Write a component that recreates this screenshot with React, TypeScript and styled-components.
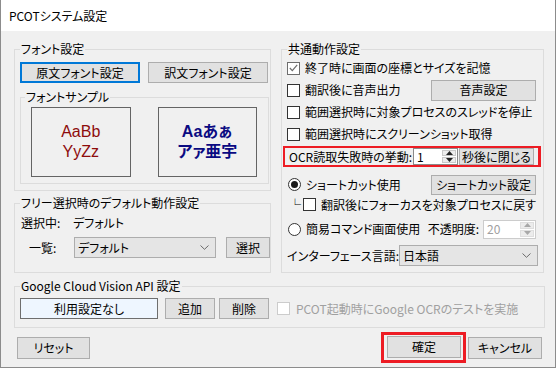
import React from "react";
import styled, { createGlobalStyle } from "styled-components";

const GlobalStyle = createGlobalStyle`
  html, body { margin: 0; padding: 0; background: #ffffff; }
  body {
    font-family: "Noto Sans CJK JP", "Noto Sans", sans-serif;
    font-size: 12px;
    color: #000;
    font-feature-settings: "palt";
  }
  * { box-sizing: border-box; }
`;

const Window = styled.div`
  width: 556px;
  height: 368px;
  border: 1px solid #8c8c8c;
  border-top: none;
  background: #f0f0f0;
  display: flex;
  flex-direction: column;
`;

const TitleBar = styled.div`
  height: 31px;
  flex: none;
  background: #ffffff;
  padding-left: 8px;
  display: flex;
  align-items: center;
  font-size: 12px;
  line-height: 16px;
`;

const Body = styled.div`
  flex: 1;
  padding: 10px 10px 0 13px;
  display: flex;
  flex-direction: column;
`;

const Columns = styled.div`
  display: flex;
  gap: 10px;
`;

const Column = styled.div<{ $w: number }>`
  width: ${(p) => p.$w}px;
  flex: none;
  display: flex;
  flex-direction: column;
`;

const Group = styled.fieldset<{ $pad: string; $mt?: number }>`
  margin: ${(p) => p.$mt ?? 0}px 0 0 0;
  min-width: 0;
  border: 1px solid #dcdcdc;
  padding: ${(p) => p.$pad};
  display: flex;
  flex-direction: column;
`;

const Legend = styled.legend<{ $inset?: number }>`
  padding: 0 1px;
  margin-left: ${(p) => p.$inset ?? 0}px;
  line-height: 16px;
  height: 16px;
  font-size: 12px;
`;

const Btn = styled.button<{ $w: number; $h?: number; $focus?: boolean }>`
  width: ${(p) => p.$w}px;
  height: ${(p) => p.$h ?? 21}px;
  flex: none;
  margin: 0;
  padding: 0;
  background: #e1e1e1;
  border: ${(p) => (p.$focus ? "2px solid #0078d7" : "1px solid #adadad")};
  font: inherit;
  font-size: 12px;
  color: #000;
  line-height: 16px;
  display: flex;
  align-items: center;
  justify-content: center;
  font-feature-settings: "palt";
`;

const ButtonRow = styled.div<{ $gap: number }>`
  display: flex;
  gap: ${(p) => p.$gap}px;
`;

const SampleRow = styled.div`
  display: flex;
  gap: 27px;
`;

const SampleBox = styled.div<{ $tone: "red" | "blue" }>`
  width: 100px;
  height: 70px;
  border: 1px solid #646464;
  display: flex;
  flex-direction: column;
  align-items: center;
  justify-content: center;
  font-family: "Liberation Sans", "Noto Sans CJK JP", sans-serif;
  font-size: 16px;
  line-height: 20px;
  color: ${(p) => (p.$tone === "red" ? "#8e0c0c" : "#0a0a82")};
  font-weight: ${(p) => (p.$tone === "red" ? 400 : 700)};
`;

const SampleLine = styled.span`
  display: block;
  height: 20px;
  line-height: 20px;
`;

const Row = styled.div<{ $h: number; $mt?: number; $pl?: number; $gap?: number }>`
  height: ${(p) => p.$h}px;
  margin-top: ${(p) => p.$mt ?? 0}px;
  padding-left: ${(p) => p.$pl ?? 0}px;
  display: flex;
  align-items: center;
  gap: ${(p) => p.$gap ?? 0}px;
  line-height: 16px;
  white-space: nowrap;
`;

const Label = styled.span<{ $w?: number; $pl?: number; $color?: string }>`
  ${(p) => (p.$w ? `width: ${p.$w}px; flex: none;` : "")}
  padding-left: ${(p) => p.$pl ?? 0}px;
  color: ${(p) => p.$color ?? "#000"};
  line-height: 16px;
`;

const RightRow = styled.div<{ $h: number; $mt?: number }>`
  height: ${(p) => p.$h}px;
  margin-top: ${(p) => p.$mt ?? 0}px;
  padding: 0 5px 0 4px;
  display: flex;
  align-items: center;
  line-height: 16px;
  white-space: nowrap;
`;

const Push = styled.div`
  margin-left: auto;
`;

const CheckBoxBox = styled.span<{ $tone?: "normal" | "soft" | "disabled" }>`
  width: 13px;
  height: 13px;
  flex: none;
  border: 1px solid
    ${(p) => (p.$tone === "soft" ? "#6d6d6d" : p.$tone === "disabled" ? "#cccccc" : "#333333")};
  background: #ffffff;
  display: inline-flex;
  align-items: center;
  justify-content: center;
  margin-right: ${(p) => (p.$tone === "disabled" ? 6 : 5)}px;
`;

const RadioCircle = styled.span`
  width: 13px;
  height: 13px;
  flex: none;
  border-radius: 50%;
  border: 1px solid #333333;
  background: #ffffff;
  display: inline-flex;
  align-items: center;
  justify-content: center;
  margin-left: 1px;
  margin-right: 5px;
`;

const RadioDot = styled.span`
  width: 7px;
  height: 7px;
  border-radius: 50%;
  background: #1a1a1a;
`;

const Corner = styled.span`
  width: 12px;
  flex: none;
  margin-left: 2px;
  margin-right: 2px;
  color: #000;
  font-size: 12px;
  line-height: 12px;
`;

const RedFrame = styled.div`
  height: 21px;
  margin-top: 1px;
  border: 2px solid #ed1c24;
  border-right-width: 3px;
  display: flex;
  align-items: stretch;
  padding-left: 4px;
  white-space: nowrap;
`;

const RedLabel = styled.span`
  width: 124px;
  flex: none;
  display: flex;
  align-items: center;
  line-height: 16px;
`;

const SpinWrap = styled.div<{ $w: number; $h: number; $disabled?: boolean }>`
  width: ${(p) => p.$w}px;
  height: ${(p) => p.$h}px;
  flex: none;
  display: flex;
  background: #ffffff;
  border: 1px solid ${(p) => (p.$disabled ? "#cccccc" : "#8a8a8a")};
  color: ${(p) => (p.$disabled ? "#a0a0a0" : "#000")};
`;

const SpinValue = styled.span`
  flex: 1;
  padding-left: 3px;
  display: flex;
  align-items: center;
  line-height: 14px;
`;

const SpinArrows = styled.div`
  width: 15px;
  flex: none;
  display: flex;
  flex-direction: column;
  gap: 1px;
  padding: 1px 1px 1px 0;
`;

const SpinArrow = styled.span<{ $disabled?: boolean }>`
  flex: 1;
  display: flex;
  align-items: center;
  justify-content: center;
  background: #ececec;
  border: 1px solid ${(p) => (p.$disabled ? "#dedede" : "#c8c8c8")};
`;

const SelectBox = styled.div<{ $w: number }>`
  width: ${(p) => p.$w}px;
  height: 21px;
  flex: none;
  border: 1px solid #adadad;
  background: #e5e5e5;
  display: flex;
  align-items: center;
  justify-content: space-between;
  padding: 0 6px 0 3px;
  line-height: 16px;
`;

const ApiBox = styled.div`
  width: 138px;
  height: 21px;
  flex: none;
  border: 1px solid #6e6e6e;
  background: #eef6ff;
  display: flex;
  align-items: center;
  justify-content: center;
  line-height: 16px;
`;

const Footer = styled.div`
  margin-top: 4px;
  padding: 0 3px;
  display: flex;
  align-items: center;
`;

const FocusFrame = styled.div`
  margin-left: auto;
  border: 3px solid #ed1c24;
  padding: 1px 2px 2px 3px;
  margin-right: 2px;
`;

const Check = () => (
  <svg width="9" height="8" viewBox="0 0 9 8">
    <polyline points="0.8,4 3.3,6.6 8.2,0.8" fill="none" stroke="#6d6d6d" strokeWidth="1.2" />
  </svg>
);

const Chevron = () => (
  <svg width="9" height="5" viewBox="0 0 9 5">
    <polyline points="0.5,0.5 4.5,4.3 8.5,0.5" fill="none" stroke="#6a6a6a" strokeWidth="1" />
  </svg>
);

const Tri = ({ up, color }: { up: boolean; color: string }) => (
  <svg width="7" height="4" viewBox="0 0 7 4">
    <polygon points={up ? "0,4 7,4 3.5,0" : "0,0 7,0 3.5,4"} fill={color} />
  </svg>
);

const Spin = ({ value, w, h, disabled }: { value: string; w: number; h: number; disabled?: boolean }) => (
  <SpinWrap $w={w} $h={h} $disabled={disabled}>
    <SpinValue>{value}</SpinValue>
    <SpinArrows>
      <SpinArrow $disabled={disabled}>
        <Tri up color={disabled ? "#a8a8a8" : "#222"} />
      </SpinArrow>
      <SpinArrow $disabled={disabled}>
        <Tri up={false} color={disabled ? "#a8a8a8" : "#222"} />
      </SpinArrow>
    </SpinArrows>
  </SpinWrap>
);

const Select = ({ value, w }: { value: string; w: number }) => (
  <SelectBox $w={w}>
    <span>{value}</span>
    <Chevron />
  </SelectBox>
);

export default function App() {
  return (
    <>
      <GlobalStyle />
      <Window>
        <TitleBar>PCOTシステム設定</TitleBar>
        <Body>
          <Columns>
            <Column $w={257}>
              <Group $pad="5px 1px 6px 5px">
                <Legend>フォント設定</Legend>
                <ButtonRow $gap={8}>
                  <Btn $w={120} $focus>
                    原文フォント設定
                  </Btn>
                  <Btn $w={120}>訳文フォント設定</Btn>
                </ButtonRow>
                <Group $pad="2px 11px 6px 10px" $mt={6}>
                  <Legend $inset={-6}>フォントサンプル</Legend>
                  <SampleRow>
                    <SampleBox $tone="red">
                      <SampleLine>AaBb</SampleLine>
                      <SampleLine>YyZz</SampleLine>
                    </SampleBox>
                    <SampleBox $tone="blue">
                      <SampleLine>Aaあぁ</SampleLine>
                      <SampleLine>アァ亜宇</SampleLine>
                    </SampleBox>
                  </SampleRow>
                </Group>
              </Group>
              <Group $pad="4px 1px 14px 5px" $mt={4}>
                <Legend>フリー選択時のデフォルト動作設定</Legend>
                <Row $h={16} $pl={1}>
                  <Label $w={52}>選択中:</Label>
                  <Label>デフォルト</Label>
                </Row>
                <Row $h={21} $mt={6} $pl={1}>
                  <Label $w={53} $pl={8}>
                    一覧:
                  </Label>
                  <Select value="デフォルト" w={142} />
                  <Btn $w={44} style={{ marginLeft: 10 }}>
                    選択
                  </Btn>
                </Row>
              </Group>
            </Column>
            <Column $w={263}>
              <Group $pad="0 2px 6px 1px">
                <Legend $inset={4}>共通動作設定</Legend>
                <RightRow $h={22}>
                  <CheckBoxBox $tone="soft">
                    <Check />
                  </CheckBoxBox>
                  <span>終了時に画面の座標とサイズを記憶</span>
                </RightRow>
                <RightRow $h={22}>
                  <CheckBoxBox />
                  <span>翻訳後に音声出力</span>
                  <Push>
                    <Btn $w={105}>音声設定</Btn>
                  </Push>
                </RightRow>
                <RightRow $h={22}>
                  <CheckBoxBox />
                  <span>範囲選択時に対象プロセスのスレッドを停止</span>
                </RightRow>
                <RightRow $h={22}>
                  <CheckBoxBox />
                  <span>範囲選択時にスクリーンショット取得</span>
                </RightRow>
                <RedFrame>
                  <RedLabel>OCR読取失敗時の挙動:</RedLabel>
                  <Spin value="1" w={45} h={17} />
                  <Btn $w={75} $h={17} style={{ marginLeft: 1 }}>
                    秒後に閉じる
                  </Btn>
                </RedFrame>
                <RightRow $h={21} $mt={7}>
                  <RadioCircle>
                    <RadioDot />
                  </RadioCircle>
                  <span>ショートカット使用</span>
                  <Push>
                    <Btn $w={105} $h={20}>
                      ショートカット設定
                    </Btn>
                  </Push>
                </RightRow>
                <RightRow $h={19}>
                  <Corner>└</Corner>
                  <CheckBoxBox />
                  <span>翻訳後にフォーカスを対象プロセスに戻す</span>
                </RightRow>
                <RightRow $h={22} $mt={4}>
                  <RadioCircle />
                  <span>簡易コマンド画面使用</span>
                  <Push>
                    <Row $h={22} $gap={4}>
                      <Label>不透明度:</Label>
                      <Spin value="20" w={53} h={19} disabled />
                    </Row>
                  </Push>
                </RightRow>
                <RightRow $h={21} $mt={5}>
                  <span>インターフェース言語:</span>
                  <Push>
                    <Select value="日本語" w={139} />
                  </Push>
                </RightRow>
              </Group>
            </Column>
          </Columns>
          <Group $pad="4px 1px 8px 5px" $mt={5}>
            <Legend>Google Cloud Vision API 設定</Legend>
            <Row $h={21}>
              <ApiBox>利用設定なし</ApiBox>
              <Btn $w={50} style={{ marginLeft: 7 }}>
                追加
              </Btn>
              <Btn $w={50} style={{ marginLeft: 4 }}>
                削除
              </Btn>
              <Row $h={21} style={{ marginLeft: 8 }}>
                <CheckBoxBox $tone="disabled" />
                <Label $color="#a0a0a0">PCOT起動時にGoogle OCRのテストを実施</Label>
              </Row>
            </Row>
          </Group>
          <Footer>
            <Btn $w={73} $h={22}>
              リセット
            </Btn>
            <FocusFrame>
              <Btn $w={74} $h={22}>
                確定
              </Btn>
            </FocusFrame>
            <Btn $w={74} $h={22}>
              キャンセル
            </Btn>
          </Footer>
        </Body>
      </Window>
    </>
  );
}
